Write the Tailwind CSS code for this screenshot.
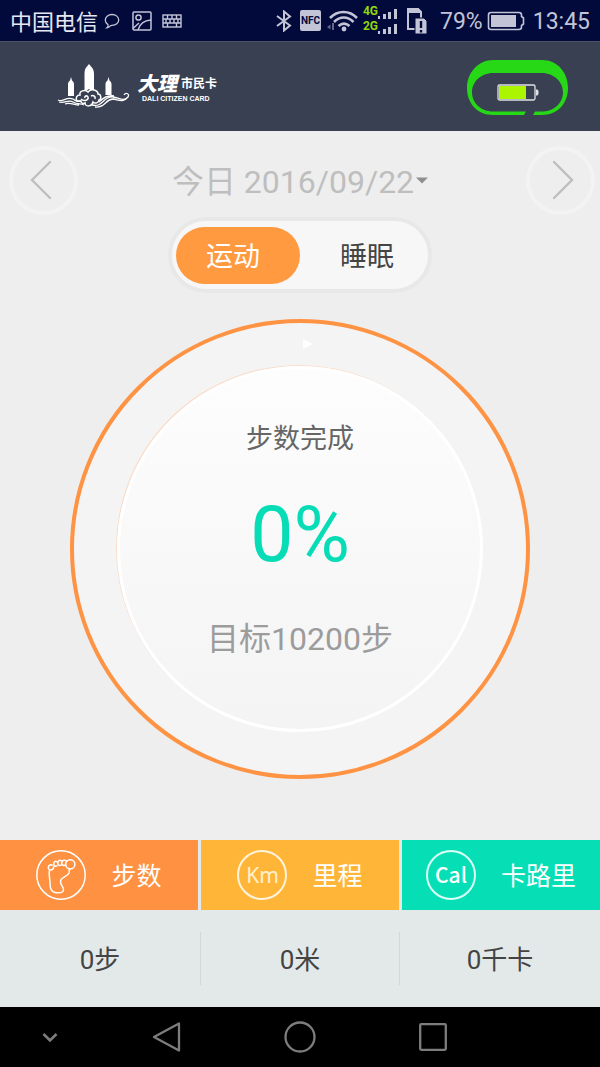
<!DOCTYPE html>
<html lang="zh-CN">
<head>
    <meta charset="UTF-8">
    <meta name="viewport" content="width=device-width, initial-scale=1.0">
    <script src="https://cdn.jsdelivr.net/npm/@tailwindcss/browser@4"></script>
    <title>大理市民卡</title>
</head>
<body class="bg-[#eeeeee] font-[Roboto,'Noto_Sans_CJK_SC',sans-serif]">
    <div class="flex flex-col min-h-screen">

        <!-- status bar -->
        <div class="flex justify-between items-center h-[42px] px-[10px] bg-[#020a3c] text-[#c3c5d6] border-b border-[#4b5265]">
            <div class="flex items-center">
                <span class="pt-1 text-[22px] leading-8 text-[#e6e7f0]">中国电信</span>
                <svg class="ml-[6px] w-4 h-4" viewBox="0 0 16 16" fill="none" stroke="currentColor" stroke-width="1.3">
                    <path d="M4 11.6C2.200 10.500 1.300 9 1.300 7.200C1.300 4 4 1.500 8 1.500S14.700 4 14.700 7S12 12.300 8 12.300C7 12.300 6.600 12.300 6 13.200C5.400 14 4.500 14.700 3 14.800C4 14 4.300 12.800 4 11.600Z"/>
                </svg>
                <svg class="ml-3 w-5 h-5" viewBox="0 0 20 20" fill="none" stroke="currentColor" stroke-width="1.5">
                    <rect x="1" y="1" width="18" height="18" rx="1"/>
                    <circle cx="6.500" cy="6.500" r="2.600"/>
                    <path d="M6 19C7.500 13 12 9.500 19 9M1 17.500L7 12"/>
                </svg>
                <svg class="ml-[10px] w-5 h-[14px]" viewBox="0 0 20 14" fill="none" stroke="currentColor" stroke-width="1.4">
                    <rect x="1" y="1" width="18" height="12"/>
                    <path d="M1 5H19M1 9H19M5.500 1V5M10 1V5M14.500 1V5M4 5V9M8 5V9M12 5V9M16 5V9M5.500 9V13M14.500 9V13"/>
                </svg>
            </div>
            <div class="flex items-center">
                <svg class="w-4 h-[22px]" viewBox="0 0 16 22" fill="none" stroke="currentColor" stroke-width="2">
                    <path d="M1 6L14 15.500L8 20.500V1.500L14 6.500L1 16"/>
                </svg>
                <span class="ml-2 w-[21px] h-[21px] rounded-xs bg-[#c3c5d6] text-[#020a3c] text-center text-[10px] leading-[21px] font-bold">NFC</span>
                <svg class="ml-[6px] w-8 h-[22px]" viewBox="0 0 32 22" fill="none" stroke="currentColor" stroke-width="2.600">
                    <path d="M3 8C10.500 0 22.500 0 30 8M7 12C13 6 20.500 6 26.500 12M11.500 16C15 13 19 13 22.500 16"/>
                    <circle cx="17" cy="19" r="2.400" fill="currentColor" stroke="none"/>
                    <path d="M0 17L3.500 14.500V19.500ZM5 13H7V20H5Z" fill="currentColor" stroke="none" opacity="0.5"/>
                </svg>
                <div class="flex flex-col ml-1">
                    <div class="flex items-start h-[15px]">
                        <span class="text-[12px] leading-[10px] font-bold text-[#8fd60a]">4G</span>
                        <svg class="mt-[3px] w-5 h-[10px]" viewBox="0 0 20 10" fill="currentColor"><path d="M0 7h2v3H0zM5 5h3v5H5zM10 3h3v7H10zM16 0h3v10H16z"/></svg>
                    </div>
                    <div class="flex items-start h-[15px]">
                        <span class="text-[12px] leading-[10px] font-bold text-[#8fd60a]">2G</span>
                        <svg class="mt-[3px] w-5 h-[10px]" viewBox="0 0 20 10" fill="currentColor"><path d="M0 7h2v3H0zM5 5h3v5H5zM10 3h3v7H10zM16 0h3v10H16z"/></svg>
                    </div>
                </div>
                <svg class="ml-2 w-[22px] h-7" viewBox="0 0 22 28">
                    <path d="M2 2V22H15V5L12 2Z" fill="none" stroke="currentColor" stroke-width="2"/>
                    <path d="M1 1H12L16 5V6H1Z" fill="currentColor"/>
                    <path d="M9 11H18L21 14V27H9Z" fill="currentColor" stroke="#020a3c" stroke-width="1"/>
                    <path d="M15 14V21M15 23V25.500" stroke="#020a3c" stroke-width="2.400"/>
                </svg>
                <span class="ml-3 text-[23px] leading-8 pt-[2px]">79%</span>
                <svg class="ml-1 w-[38px] h-5" viewBox="0 0 38 20">
                    <path d="M4 1.500H32Q34.500 1.500 34.500 4V5.500L36.500 7V13L34.500 14.500V16Q34.500 18.500 32 18.500H4Q1.500 18.500 1.500 16V4Q1.500 1.500 4 1.500Z" fill="none" stroke="currentColor" stroke-width="1.600"/>
                    <rect x="4" y="4" width="25" height="12" fill="currentColor"/>
                </svg>
                <span class="ml-2 text-[23px] leading-8 pt-[2px]">13:45</span>
            </div>
        </div>

        <!-- app header -->
        <header class="flex justify-between items-center h-[89px] pl-[57px] pr-8 bg-[#394052]">
            <a href="#" class="flex items-center gap-[6px] text-white">
                <svg class="w-[74px] h-[46px]" viewBox="0 0 74 46" fill="none" stroke="#fff">
                    <path d="M27.500 28V10C27.500 7 28 4 30 2.500L32 0L34 2.500C36 4 37 7 37 10V29L32 25Z" fill="#fff" stroke="none"/>
                    <path d="M11 32V20C11 18 12.500 17 13 16.500L14 13L15 16.500C15.500 17 17 18 17 20V32ZM48.500 31V20C48.500 18 50 17 50.500 16.500L51.500 13L52.500 16.500C53 17 54.500 18 54.500 20V31Z" fill="#fff" stroke="none"/>
                    <path d="M20 37C18 34 20 31 23 31C22 27 28 25 31 28C34 24 41 26 41 30C44 30 45 35 42 36C42 39 38 40 36 38C35 43 28 43 28 39C26 40 24 39 24 37Z" fill="#394052" stroke-width="1.500"/>
                    <path d="M24 35C27 38 32 36 31 33C30 31 27 32 28 34M34 32C36 31 39 32 38 35" stroke-width="1.500"/>
                    <path d="M1 36C6 39 9 32 16 35C19 37 20 38 24 37M2 38C8 40 11 35 16 38C21 41 24 39 27 41M8 40C13 38 17 41 22 41" stroke-width="1.300"/>
                    <path d="M35 41C46 44 46 32 56 33C63 34 66 38 71 33C73 30 69 28 67 31M38 43C49 44 48 35 56 35C62 36 66 39 71 33M42 38C48 32 52 31 57 32" stroke-width="1.300"/>
                </svg>
                <span class="flex flex-col">
                    <span class="flex items-center gap-1 leading-6">
                        <span class="text-[20px] font-black italic font-['Noto_Sans_CJK_SC',sans-serif]">大理</span>
                        <span class="text-[12px] font-bold font-['Noto_Sans_CJK_SC',sans-serif]">市民卡</span>
                    </span>
                    <span class="pl-[5px] text-[7px] leading-2 font-bold font-['Liberation_Sans',sans-serif] whitespace-nowrap">DALI CITIZEN CARD</span>
                </span>
            </a>
            <button aria-label="手环电量" class="pt-[2px]">
                <svg class="w-[101px] h-[55px]" viewBox="0 0 101 55">
                    <path d="M26 0H75C91 0 101 13 101 28C101 44 90 55 75 55H66L68 51.500H75C87 51.500 96 43 96 32C96 22 87 13 75 13H26C14 13 5 22 5 32C5 43 14 51.500 26 51.500H59L57 55H26C11 55 0 44 0 28C0 13 11 0 26 0Z" fill="#26d815"/>
                    <rect x="31" y="25" width="37" height="15" rx="1.500" fill="none" stroke="#dfe1e6" stroke-width="1.300"/>
                    <rect x="32" y="26" width="27" height="13" fill="#abf500"/>
                    <path d="M69 29.500H70.500L71.500 31V34L70.500 35.500H69Z" fill="#dfe1e6"/>
                </svg>
            </button>
        </header>

        <main class="flex flex-col items-center flex-1 pt-[15px] pb-8">
            <!-- date picker -->
            <div class="flex justify-between items-center w-full pl-[9px] pr-[5px]">
                <button aria-label="前一天" class="flex justify-center items-center w-[69px] h-[69px] rounded-full border-4 border-[#f3f3f3]">
                    <svg class="w-[61px] h-[61px]" viewBox="0 0 61 61" fill="none" stroke="#bdbdbd" stroke-width="2.300" stroke-linecap="round"><path d="M37 12L19 30L37 48"/></svg>
                </button>
                <button class="flex items-center pr-1 text-[32px] leading-10 text-[#bebebe]">
                    <span class="pt-[3px]">今日 2016/09/22</span>
                    <svg class="ml-[2px] w-3 h-[7px]" viewBox="0 0 12 7" fill="#8f8f8f"><path d="M0 0.500H12L6 6.500Z"/></svg>
                </button>
                <button aria-label="后一天" class="flex justify-center items-center w-[69px] h-[69px] rounded-full border-4 border-[#f3f3f3]">
                    <svg class="w-[61px] h-[61px]" viewBox="0 0 61 61" fill="none" stroke="#bdbdbd" stroke-width="2.300" stroke-linecap="round"><path d="M24 12L42 30L24 48"/></svg>
                </button>
            </div>

            <!-- sport / sleep switch -->
            <div class="flex items-center mt-[2px] px-1 pt-[6px] pb-[5px] rounded-full border-4 border-[#e8e8e8] bg-[#f7f7f7] text-[27px] leading-[53px]">
                <button id="sportBtn" onclick="switchTab('sport')" class="w-[124px] rounded-full bg-[#ff9a40] text-white pt-1 pr-[10px]">运动</button>
                <button id="sleepBtn" onclick="switchTab('sleep')" class="w-[124px] rounded-full text-[#444444] pt-1 pl-[10px]">睡眠</button>
            </div>

            <!-- progress ring -->
            <div class="relative flex justify-center items-center mt-[26px] w-[460px] max-w-full aspect-square rounded-full border-4 border-[#ff9344] bg-[#f4f4f4]">
                <svg class="absolute top-4 left-1/2 ml-[3px] w-[10px] h-[10px]" viewBox="0 0 10 10" fill="#fff"><path d="M0 0L10 5L0 10Z"/></svg>
                <div class="flex flex-col items-center w-[366px] max-w-full aspect-square pt-[50px] rounded-full border-3 border-white bg-linear-to-b from-[#fdfdfd] to-[#f4f4f4] shadow-[-1px_-1px_0_#fbdcc8]">
                    <p class="text-[27px] leading-10 text-[#666666]">步数完成</p>
                    <p class="mt-9 text-[77px] leading-20 text-[#06dcb5]">0%</p>
                    <p class="mt-11 text-[32px] leading-10 text-[#9c9c9c]">目标10200步</p>
                </div>
            </div>
        </main>

        <!-- totals -->
        <div class="grid grid-cols-3 gap-[3px] h-[70px] bg-[#e3e9e9] text-white text-[25px]">
            <button class="flex justify-center items-center gap-[25px] bg-[#ff9242]">
                <svg class="w-[50px] h-[50px]" viewBox="0 0 50 50" fill="none" stroke="#fff" stroke-width="1.500">
                    <circle cx="25" cy="25" r="24.200"/>
                    <path d="M13.500 20C12.500 25 14 29 14 33C14 38 15 42 19 42.500C22 43 27 43 27.500 40C28 37 24 35 24.500 31C25 27 31 27 33 23C33.700 21.500 33.300 20 33 19"/>
                    <circle cx="34.300" cy="14.300" r="4.600"/>
                    <path d="M29.700 15C25 17 24.500 11 28 10.300C29.500 10 30.500 11 31 11.500M26 14.500C21 18 20.500 10.500 24 10.300C25 10.300 25.500 11 26 11.500M21.500 15.500C17.500 18.500 16.500 12 19.500 11.300C20.500 11.200 21 11.700 21.500 12M17.700 16.500C17.500 21 12.500 21 12.300 17.500C12.300 15 15 14 16.700 15.500"/>
                </svg>
                <span class="pt-1">步数</span>
            </button>
            <button class="flex justify-center items-center gap-[25px] bg-[#ffb638]">
                <span class="w-[50px] h-[50px] rounded-full border-2 border-[#fff3dc] text-[21px] leading-[46px] text-[#fff0d0] font-['Noto_Sans',sans-serif]">Km</span>
                <span class="pt-1">里程</span>
            </button>
            <button class="flex justify-center items-center gap-[25px] bg-[#06dfb6]">
                <span class="w-[50px] h-[50px] rounded-full border-2 border-[#dcfff7] text-[21px] leading-[44px] font-medium font-['Noto_Sans_CJK_SC',sans-serif]">Cal</span>
                <span class="pt-1">卡路里</span>
            </button>
        </div>
        <div class="grid grid-cols-3 py-[22px] bg-[#e3e9e9] text-[#444444] text-[26px] leading-[49px] text-center">
            <p class="pt-1">0步</p>
            <p class="pt-1 border-x border-[#d3d7d8]">0米</p>
            <p class="pt-1">0千卡</p>
        </div>

        <!-- system navigation -->
        <nav class="grid grid-cols-[3fr_4fr_4fr_4fr_3fr] h-[60px] bg-black text-[#7d7d7d]">
            <button aria-label="收起" class="flex justify-center items-center">
                <svg class="w-4 h-4" viewBox="0 0 16 16" fill="none" stroke="currentColor" stroke-width="2.600"><path d="M1.500 5L8 11.500L14.500 5"/></svg>
            </button>
            <button aria-label="返回" class="flex justify-center items-center">
                <svg class="w-8 h-8" viewBox="0 0 32 32" fill="none" stroke="currentColor" stroke-width="2.300" stroke-linejoin="round"><path d="M28 2.500V29.500L3 16Z"/></svg>
            </button>
            <button aria-label="主页" class="flex justify-center items-center">
                <svg class="w-8 h-8" viewBox="0 0 32 32" fill="none" stroke="currentColor" stroke-width="2.300"><circle cx="16" cy="16" r="14.500"/></svg>
            </button>
            <button aria-label="最近任务" class="flex justify-center items-center">
                <svg class="w-8 h-8" viewBox="0 0 32 32" fill="none" stroke="currentColor" stroke-width="2.300"><rect x="3.200" y="3.200" width="25.600" height="25.600" rx="1"/></svg>
            </button>
        </nav>
    </div>
</body>

<script>
    function switchTab(tab){
        const sport = document.getElementById("sportBtn");
        const sleep = document.getElementById("sleepBtn");
        const on = tab === "sport" ? sport : sleep;
        const off = tab === "sport" ? sleep : sport;

        on.classList.add("bg-[#ff9a40]", "text-white");
        on.classList.remove("text-[#444444]");
        off.classList.add("text-[#444444]");
        off.classList.remove("bg-[#ff9a40]", "text-white");
    }
</script>
</html>
